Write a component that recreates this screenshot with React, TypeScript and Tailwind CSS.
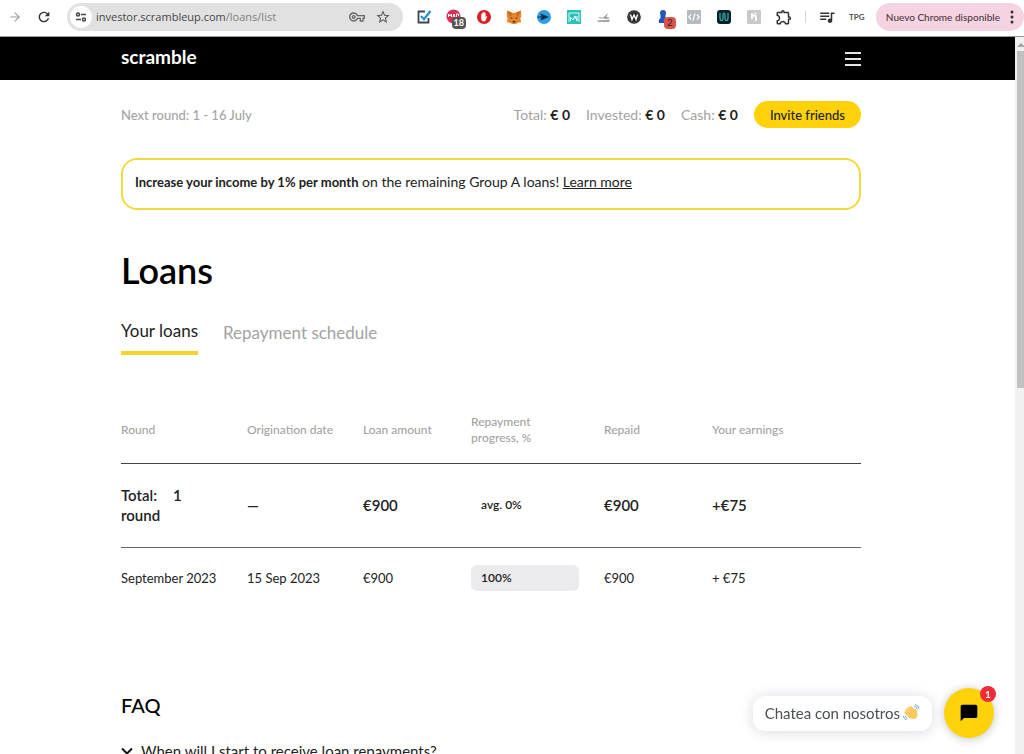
import React from 'react';
import { FiArrowRight } from 'react-icons/fi';
import { MdChatBubble, MdOutlineExtension, MdOutlineVpnKey, MdQueueMusic, MdRefresh, MdStarBorder } from 'react-icons/md';

interface Extension {
  name: string;
  icon: React.ReactNode;
}

interface Loan {
  round: string;
  date: string;
  amount: string;
  progress: string;
  repaid: string;
  earnings: string;
}

const extensions: Extension[] = [
  {
    name: 'Tasks',
    icon: (
      <svg viewBox="0 0 16 16" className="size-4" fill="none">
        <path d="M9 2.5H2.5v11h10V9" stroke="#3c4650" strokeWidth="1.8" />
        <path d="M5 7l3 3.2L14.5 2" stroke="#2f8fd8" strokeWidth="2.4" />
      </svg>
    ),
  },
  {
    name: 'Web shield',
    icon: (
      <span className="relative">
        <svg viewBox="0 0 16 16" className="size-4">
          <circle cx="7.5" cy="7.5" r="7" fill="#dc2f52" />
          <path d="M2.5 8V5l1.5 2 1.5-2v3M7 8l1-3 1 3M10.5 8V5h2v2" stroke="#fff" fill="none" />
        </svg>
        <span className="absolute -right-1 -bottom-1 flex h-3 w-3.5 items-center justify-center rounded-sm bg-[#555] text-[9px] font-bold text-white">18</span>
      </span>
    ),
  },
  {
    name: 'Blocker',
    icon: (
      <svg viewBox="0 0 16 16" className="size-4">
        <circle cx="8" cy="8" r="7" fill="#dd1d24" />
        <path d="M5.2 8.5V5.2q.5-.7 1 0V7V3.8q.6-.7 1.1 0V7V3.2q.6-.7 1.2 0V7V4q.6-.7 1.1 0v4.2l1-1.2q.8-.2.6.6L9.6 11.5q-1 1.2-2.6.8-1.6-.5-1.8-2.5z" fill="#fff" />
      </svg>
    ),
  },
  {
    name: 'Wallet',
    icon: (
      <svg viewBox="0 0 16 16" className="size-4">
        <path d="M1 1.5l5 2.3h4l5-2.3.3 6-1 2 1 3.5-3.6 1-2 1H6.3l-2-1-3.6-1 1-3.5-1-2z" fill="#e8862e" />
        <path d="M1 1.5l5 2.3L4.5 8zM15 1.5l-5 2.3L11.5 8z" fill="#c9651b" />
        <path d="M4 8.5l2.5.3-.3 1.2zM12 8.5l-2.5.3.3 1.2zM6.5 12h3l-.5 1.5H7z" fill="#3a2a22" />
      </svg>
    ),
  },
  {
    name: 'Player',
    icon: (
      <svg viewBox="0 0 16 16" className="size-4">
        <circle cx="8" cy="8" r="7" fill="#2d9de8" />
        <path d="M4.5 4.5L13 8l-8.5 3.5 1-3.5z" fill="#12304c" />
        <path d="M1.5 8h6" stroke="#12304c" />
      </svg>
    ),
  },
  {
    name: 'Monitor',
    icon: (
      <svg viewBox="0 0 16 16" className="size-4" fill="none">
        <path d="M1 1h14v14H1z" fill="#29c2ba" />
        <path d="M3 13V4h10v9" stroke="#d9fbf8" />
        <path d="M4.5 12V8.5L7 11l2-4 2 5V7" stroke="#fff" />
      </svg>
    ),
  },
  {
    name: 'Shoes',
    icon: (
      <svg viewBox="0 0 16 16" className="size-4">
        <path d="M3 8l4 .8L12 4l-1.5 4 3 .7-1 1.3-9.5-.8zM1 11.5l13-.7-.8 2.2H2z" fill="#a3a3a3" />
      </svg>
    ),
  },
  {
    name: 'Wappa',
    icon: (
      <svg viewBox="0 0 16 16" className="size-4">
        <circle cx="8" cy="8" r="6.8" fill="#262626" />
        <circle cx="8" cy="8" r="5.3" fill="none" stroke="#777" strokeWidth=".5" />
        <path d="M4.5 5.5l1.5 5 2-4.5 2 4.5 1.5-5" stroke="#fff" strokeWidth="1.4" fill="none" />
      </svg>
    ),
  },
  {
    name: 'Contacts',
    icon: (
      <span className="relative">
        <svg viewBox="0 0 16 16" className="size-4">
          <circle cx="7" cy="4" r="3" fill="#2457b5" />
          <path d="M4.5 6h5v8H3q-1-3.5 1.5-5z" fill="#2457b5" />
        </svg>
        <span className="absolute -right-1 -bottom-1 flex size-3 items-center justify-center rounded-sm bg-[#d9534f] text-[9px] text-[#3b1614]">2</span>
      </span>
    ),
  },
  {
    name: 'Code',
    icon: (
      <svg viewBox="0 0 16 16" className="size-4">
        <rect x="1" y="1" width="14" height="14" rx="1" fill="#b4b9c2" />
        <path d="M5 5.5L2.8 8 5 10.5M11 5.5L13.2 8 11 10.5M9 4.5l-2 7" stroke="#fff" strokeWidth="1.2" fill="none" />
      </svg>
    ),
  },
  {
    name: 'Waves',
    icon: (
      <svg viewBox="0 0 16 16" className="size-4">
        <rect x="1" y="1" width="14" height="14" rx="3" fill="#08222c" />
        <path d="M4 4v5q0 2.5 1.5 2.5T7 9V6q0-2 1-2t1 2v3q0 2.5 1.5 2.5T12 9V4" stroke="#35b5ae" strokeWidth="1.2" fill="none" />
      </svg>
    ),
  },
  {
    name: 'Coupons',
    icon: (
      <svg viewBox="0 0 16 16" className="size-4">
        <rect x="1" y="1" width="14" height="14" rx="1" fill="#c9c9c9" />
        <path d="M6 4v6M6 8q0-1.5 2-1.5t2 1.5v4M9.5 3.5v1.5" stroke="#fff" strokeWidth="1.8" fill="none" />
      </svg>
    ),
  },
  { name: 'Extensions', icon: <MdOutlineExtension className="size-[18px] text-[#303134]" /> },
];

const loans: Loan[] = [
  { round: 'September 2023', date: '15 Sep 2023', amount: '€900', progress: '100%', repaid: '€900', earnings: '+ €75' },
];

const balances = [
  { label: 'Total:', value: '€ 0' },
  { label: 'Invested:', value: '€ 0' },
  { label: 'Cash:', value: '€ 0' },
];

const BrowserBar: React.FC = () => {
  return (
    <div className="flex h-[37px] shrink-0 items-start border-b border-[#9a9a9a] bg-white pt-[3px]">
      <button aria-label="Forward" className="flex h-7 w-[29px] items-center justify-center text-[#9aa0a6]">
        <FiArrowRight className="size-3.5" />
      </button>
      <button aria-label="Reload" className="flex h-7 w-[30px] items-center justify-center text-[#303134]">
        <MdRefresh className="size-4" />
      </button>

      <div className="ml-2 flex h-7 min-w-0 flex-1 items-center rounded-full bg-[#e1e1e1] pr-3 pl-[3px]">
        <button aria-label="Site settings" className="flex size-[22px] shrink-0 items-center justify-center rounded-full bg-white">
          <svg viewBox="0 0 12 12" className="size-3" fill="none" stroke="#474747" strokeWidth="1.5">
            <circle cx="3" cy="3.5" r="1.5" />
            <path d="M6 3.5h5M1 8.5h5" />
            <circle cx="9" cy="8.5" r="1.5" />
          </svg>
        </button>
        <p className="ml-1 flex-1 truncate font-['Open_Sans',sans-serif] text-[11px] text-[#474747]">
          investor.scrambleup.com<span className="text-[#808080]">/loans/list</span>
        </p>
        <button aria-label="Passwords" className="mr-2.5 text-[#6a6a6a]">
          <MdOutlineVpnKey className="size-4" />
        </button>
        <button aria-label="Bookmark" className="text-[#5a5a5a]">
          <MdStarBorder className="size-4" />
        </button>
      </div>

      <div className="ml-1.5 flex">
        {extensions.map((ext) => (
          <button key={ext.name} aria-label={ext.name} className="flex h-7 w-[30px] items-center justify-center">
            {ext.icon}
          </button>
        ))}
      </div>

      <div className="mx-1.5 mt-2 h-3 w-px bg-[#dccfd6]" />
      <button aria-label="Media" className="flex h-7 w-[30px] items-center justify-center text-[#303134]">
        <MdQueueMusic className="size-[18px]" />
      </button>
      <button className="flex h-7 w-[30px] items-center justify-center text-[8px] font-bold text-[#555]">TPG</button>
      <button className="ml-1 flex h-7 items-center rounded-full bg-[#f5d3e2] px-2.5 text-[#4b3b43]">
        <span className="text-[10px] font-medium whitespace-nowrap">Nuevo Chrome disponible</span>
        <svg viewBox="0 0 4 14" className="ml-2.5 h-3.5 w-1" fill="#303134">
          <circle cx="2" cy="2" r="1.5" />
          <circle cx="2" cy="7" r="1.5" />
          <circle cx="2" cy="12" r="1.5" />
        </svg>
      </button>
    </div>
  );
};

const LoansTable: React.FC = () => {
  return (
    <table className="mt-[42px] w-full table-fixed text-left text-[13px] leading-5">
      <thead>
        <tr className="h-[66px] border-b border-[#444] text-[12px] leading-4 text-[#a3a3a3]">
          <th className="w-[126px] font-medium">Round</th>
          <th className="w-[116px] font-medium">Origination date</th>
          <th className="w-[108px] font-medium">Loan amount</th>
          <th className="w-[133px] pr-12 font-medium">Repayment progress, %</th>
          <th className="w-[108px] font-medium">Repaid</th>
          <th className="font-medium">Your earnings</th>
        </tr>
      </thead>
      <tbody>
        <tr className="h-[84px] border-b border-[#666] text-[15px] font-semibold">
          <td>
            Total:<span className="ml-4">1</span>
            <br />
            round
          </td>
          <td>—</td>
          <td>€900</td>
          <td className="pl-2.5 text-[12px]">avg. 0%</td>
          <td>€900</td>
          <td>+€75</td>
        </tr>
        {loans.map((loan) => (
          <tr key={loan.round} className="h-[62px]">
            <td>{loan.round}</td>
            <td>{loan.date}</td>
            <td>{loan.amount}</td>
            <td className="pr-[25px]">
              <div className="flex h-[26px] items-center rounded-md bg-[#ebebed] pl-2.5 text-[12px] font-semibold">{loan.progress}</div>
            </td>
            <td>{loan.repaid}</td>
            <td>{loan.earnings}</td>
          </tr>
        ))}
      </tbody>
    </table>
  );
};

const ChatWidget: React.FC = () => {
  return (
    <div className="fixed right-[30px] bottom-4 flex items-center gap-3">
      <button className="flex h-[35px] items-center rounded-xl bg-white px-3 text-[15px] text-[#4a5056] shadow-[0_1px_14px_rgba(0,20,60,0.16)]">
        Chatea con nosotros
        <svg viewBox="0 0 20 20" className="ml-0.5 size-[18px]" fill="none" strokeLinecap="round">
          <path d="M5 6.5l5 6M7.3 4.5l5 6M10 3.5l4.5 5.5M4 9.5l5 5" stroke="#fcc95c" strokeWidth="2.6" />
          <path d="M5.5 10L13 7l2-1.5q1.5 0 1.3 1.5l1 4q.2 4-3.3 5.5-3.5 1-5.5-1.5z" fill="#fcc95c" />
          <path d="M14 2.5q2.5.5 3 3M15 .8q3.5.8 3.8 4M1.5 14q.5 3 3.5 3.5M3.5 13.5q.3 1.5 2 2" stroke="#4fa3df" strokeWidth="1" />
        </svg>
      </button>
      <button aria-label="Open chat" className="relative flex size-[50px] items-center justify-center rounded-full bg-[#fdd208] text-black shadow-[0_1px_10px_rgba(0,20,60,0.25)]">
        <MdChatBubble className="size-5" />
        <span className="absolute -top-0.5 -right-0.5 flex size-4 items-center justify-center rounded-full bg-[#ee2b37] text-[10px] font-bold text-white">1</span>
      </button>
    </div>
  );
};

const App: React.FC = () => {
  return (
    <div className="flex h-screen flex-col overflow-hidden bg-white font-['Lato',sans-serif] text-[#222]">
      <BrowserBar />
      <div className="flex min-h-0 flex-1">
        <div className="min-w-0 flex-1 overflow-hidden">
          <header className="flex h-[43px] items-center justify-between bg-black pr-[154px] pl-[121px] text-white">
            <a href="#" className="pb-1 text-[19px] leading-6 font-bold">scramble</a>
            <button aria-label="Menu" className="flex w-4 flex-col gap-1">
              <span className="h-0.5 bg-[#e5e5e5]" />
              <span className="h-0.5 bg-[#e5e5e5]" />
              <span className="h-0.5 bg-[#e5e5e5]" />
            </button>
          </header>

          <main className="pt-[21px] pr-[154px] pl-[121px]">
            <div className="flex items-center text-[14px] leading-5">
              <p className="flex-1 text-[13px] font-medium text-[#a3a3a3]">Next round: 1 - 16 July</p>
              <div className="flex gap-4">
                {balances.map((item) => (
                  <p key={item.label} className="text-[#a3a3a3]">
                    {item.label} <b className="text-[#222]">{item.value}</b>
                  </p>
                ))}
              </div>
              <button className="ml-4 h-[27px] rounded-full bg-[#fdd208] px-4 text-[13px] font-medium">Invite friends</button>
            </div>

            <p className="mt-[30px] rounded-2xl border-2 border-[#f0d943] px-3 pt-3 pb-4 text-[14px] leading-5">
              <b className="text-[13px]">Increase your income by 1% per month</b> on the remaining Group A loans! <a href="#" className="underline">Learn more</a>
            </p>

            <h1 className="mt-10 text-[36px] leading-10 font-semibold text-black">Loans</h1>

            <nav className="mt-[29px] flex items-start gap-[25px] text-[17px] leading-6">
              <a href="#" className="border-b-4 border-[#f5d327] pb-2">Your loans</a>
              <a href="#" className="pt-0.5 text-[#a3a3a3]">Repayment schedule</a>
            </nav>

            <LoansTable />

            <h2 className="mt-[82px] text-[20px] leading-7 font-medium text-black">FAQ</h2>
            <button className="mt-5 flex items-center gap-2 text-[15px] leading-6">
              <svg viewBox="0 0 12 12" className="size-3" fill="none" stroke="#111" strokeWidth="2">
                <path d="M1 3.5l5 5 5-5" />
              </svg>
              When will I start to receive loan repayments?
            </button>
          </main>
        </div>

        {/* Scrollbar */}
        <div className="w-[9px] shrink-0 bg-[#f1f1f1] pl-0.5">
          <svg viewBox="0 0 7 14" className="h-3.5 w-[7px]" fill="#a3a3a3">
            <path d="M0 10l4-4 3 3v1z" />
          </svg>
          <div className="h-[47%] bg-[#c1c1c1]" />
        </div>
      </div>
      <ChatWidget />
    </div>
  );
};

export default App;
